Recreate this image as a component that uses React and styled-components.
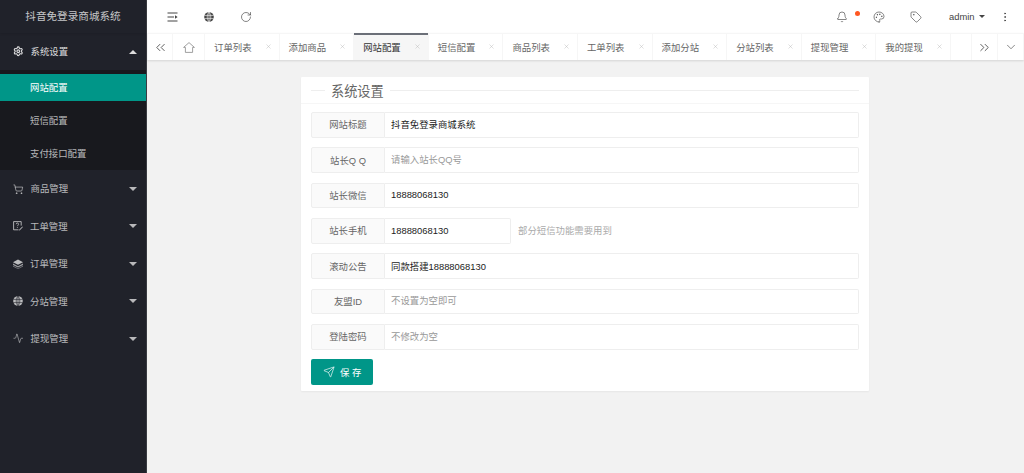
import React from 'react';
import styled, { createGlobalStyle } from 'styled-components';
import {
  Settings, ShoppingCart, Activity, RotateCw, Bell, Palette, Tag,
  EllipsisVertical, Send, ChevronsLeft, ChevronsRight, ChevronDown, X,
} from 'lucide-react';

const GlobalStyle = createGlobalStyle`
  html, body, #root { margin: 0; height: 100%; }
  body {
    overflow: hidden;
    background: #f2f2f2;
    font-family: "Liberation Sans", "Noto Sans CJK SC", sans-serif;
    font-size: 9.4px;
    color: #666;
  }
  * { box-sizing: border-box; }
`;

const Layout = styled.div`
  display: flex;
  height: 473px;
`;

const Sidebar = styled.aside`
  flex: none;
  width: 147px;
  background: #20222a;
  border-right: 1px solid #3a3c42;
  color: rgba(255, 255, 255, 0.7);
`;

const Logo = styled.div`
  height: 33px;
  line-height: 33px;
  text-align: center;
  font-size: 10.6px;
  color: rgba(255, 255, 255, 0.75);
  box-shadow: 0 1px 2px rgba(0, 0, 0, 0.1);
`;

const NavItem = styled.div`
  display: flex;
  align-items: center;
  height: 37.4px;
  padding: 0 9px 0 13px;
  gap: 7px;
  color: ${(p) => (p.$open ? 'rgba(255,255,255,.85)' : 'rgba(255,255,255,.7)')};
  svg { flex: none; }
`;

const NavLabel = styled.span`
  flex: 1;
  padding-bottom: 1px;
`;

const Caret = styled.i`
  width: 0;
  height: 0;
  border: 4px solid transparent;
  ${(p) => (p.$up
    ? 'border-bottom: 4px solid #ddd; border-top-width: 0;'
    : 'border-top: 4px solid #b9b9bb; border-bottom-width: 0;')}
`;

const SubMenu = styled.div`
  background: #18191e;
  padding-top: 3.5px;
`;

const SubItem = styled.div`
  display: flex;
  align-items: center;
  padding: 0 0 1.5px 30px;
  height: ${(p) => (p.$active ? '27px' : '33.2px')};
  margin-bottom: ${(p) => (p.$active ? '3px' : '0')};
  background: ${(p) => (p.$active ? '#009688' : 'transparent')};
  color: ${(p) => (p.$active ? '#fff' : 'rgba(255,255,255,.7)')};
`;

const Main = styled.div`
  flex: 1;
  min-width: 0;
  display: flex;
  flex-direction: column;
`;

const Header = styled.header`
  flex: none;
  display: flex;
  align-items: center;
  height: 33px;
  background: #fff;
  color: #444;
  padding: 0 0 0 18px;
`;

const HeaderTool = styled.span`
  display: flex;
  align-items: center;
  justify-content: center;
  width: 14px;
  margin-right: ${(p) => p.$gap || 23}px;
`;

const Spacer = styled.div`
  flex: 1;
`;

const BellBox = styled.span`
  position: relative;
  display: flex;
`;

const Dot = styled.i`
  position: absolute;
  top: 0.5px;
  left: 19.5px;
  width: 5px;
  height: 5px;
  border-radius: 50%;
  background: #ff5722;
`;

const UserName = styled.span`
  display: flex;
  align-items: center;
  gap: 4.5px;
  margin-right: 13px;
  color: #444;
`;

const UserCaret = styled.i`
  border: 3.6px solid transparent;
  border-top: 3.6px solid #444;
  border-bottom-width: 0;
`;

const TabBar = styled.nav`
  flex: none;
  display: flex;
  height: 27px;
  background: #fff;
  border-top: 1px solid #f6f6f6;
  box-shadow: 0 1px 2px rgba(0, 0, 0, 0.12);
  color: #666;
`;

const TabTool = styled.span`
  flex: none;
  display: flex;
  align-items: center;
  justify-content: center;
  width: ${(p) => p.$w}px;
  border-right: 1px solid #f6f6f6;
  color: ${(p) => p.$color || '#555'};
  ${(p) => p.$left && 'border-left: 1px solid #f6f6f6;'}
`;

const Tabs = styled.div`
  flex: 1;
  min-width: 0;
  display: flex;
`;

const TabItem = styled.div`
  flex: none;
  position: relative;
  display: flex;
  align-items: center;
  justify-content: space-between;
  width: 74.6px;
  padding: 0 7px 1px 9px;
  border-right: 1px solid #f6f6f6;
  background: ${(p) => (p.$active ? '#f6f6f6' : '#fff')};
  color: ${(p) => (p.$active ? '#333' : '#666')};
  svg { color: #b5b5b5; }
  ${(p) => p.$active && `
    &::before {
      content: "";
      position: absolute;
      left: 0;
      right: 0;
      top: -1px;
      height: 2px;
      background: #6b6f78;
    }
  `}
`;

const Content = styled.main`
  flex: 1;
  padding: 17px 155px 0 154px;
`;

const Card = styled.section`
  background: #fff;
  border-radius: 1px;
  box-shadow: 0 1px 2px rgba(0, 0, 0, 0.05);
`;

const CardHead = styled.div`
  display: flex;
  align-items: center;
  height: 27px;
  padding: 0 10px;
  border-bottom: 1px solid #f6f6f6;
`;

const HeadLine = styled.i`
  height: 1px;
  background: #eee;
  flex: ${(p) => (p.$grow ? 1 : 'none')};
  width: ${(p) => (p.$grow ? 'auto' : '14px')};
`;

const Legend = styled.h2`
  margin: 0;
  padding: 0 6px;
  font-size: 13.2px;
  font-weight: 400;
  color: #666;
`;

const Form = styled.form`
  display: flex;
  flex-direction: column;
  gap: 9.85px;
  padding: 8px 10px 6px;
`;

const Row = styled.div`
  display: flex;
  align-items: center;
  height: 25.5px;
`;

const Label = styled.label`
  flex: none;
  width: 74px;
  height: 100%;
  display: flex;
  align-items: center;
  justify-content: center;
  padding-bottom: 1px;
  background: #fafafa;
  border: 1px solid #eee;
  border-radius: 2px 0 0 2px;
  color: #666;
`;

const Input = styled.input`
  flex: ${(p) => (p.$short ? 'none' : 1)};
  width: ${(p) => (p.$short ? '126px' : 'auto')};
  min-width: 0;
  height: 100%;
  padding: 0 6px 1px;
  border: 1px solid #eee;
  border-left: 0;
  border-radius: 0 2px 2px 0;
  outline: none;
  background: #fff;
  font: inherit;
  color: #222;
  &::placeholder { color: #999; opacity: 1; }
`;

const Help = styled.span`
  margin-left: 7px;
  padding-bottom: 1px;
  color: #aaa;
`;

const SaveButton = styled.button`
  align-self: flex-start;
  display: flex;
  align-items: center;
  gap: 5px;
  width: 62px;
  height: 26px;
  padding: 0 0 0 12px;
  border: 0;
  border-radius: 2px;
  background: #009688;
  color: #fff;
  font: inherit;
  letter-spacing: 2.5px;
`;

// 线框图标库里没有的几个，直接画
const ShrinkIcon = () => (
  <svg width="11" height="10" viewBox="0 0 11 10" fill="none" stroke="currentColor" strokeWidth="1.1">
    <path d="M0.5 1h10M0.5 5h6.5M0.5 9h10" />
    <path d="M8 3.2 10.6 5 8 6.8z" fill="currentColor" stroke="none" />
  </svg>
);

const GlobeIcon = ({ line }) => (
  <svg width="10" height="10" viewBox="0 0 10 10" fill="none">
    <circle cx="5" cy="5" r="4.8" fill="currentColor" />
    <path
      d="M0.3 3.4h9.4M0.3 6.6h9.4M5 0.2v9.6M5 0.2C2.6 2.8 2.6 7.2 5 9.8M5 0.2c2.4 2.6 2.4 7 0 9.6"
      stroke={line}
      strokeWidth="0.6"
    />
  </svg>
);

const LayersIcon = () => (
  <svg width="10" height="10" viewBox="0 0 10 10" fill="currentColor">
    <path d="M5 0.6 10 3.2 5 5.8 0 3.2z" />
    <path d="M0 4.6 5 7.2 10 4.6V6L5 8.6 0 6z" opacity="0.8" />
    <path d="M0 6.8 5 9.4 10 6.8V7.4L5 10 0 7.4z" opacity="0.7" />
  </svg>
);

const TicketIcon = () => (
  <svg width="10" height="10" viewBox="0 0 10 10" fill="none" stroke="currentColor" strokeWidth="0.9">
    <path d="M5.5 8.8H0.6V0.6h7.6v4" />
    <path d="M3.2 3.2c0-1.6 2.4-1.6 2.4 0 0 .9-1.2 1-1.2 2M4.4 6.2v.8" strokeWidth="0.8" />
    <path d="M9.4 5.4 6.4 8.6l-.5 1 1-.4 3-3.2z" fill="currentColor" stroke="none" />
  </svg>
);

const HomeIcon = () => (
  <svg width="12" height="11" viewBox="0 0 12 11" fill="none" stroke="currentColor" strokeWidth="0.8">
    <path d="M0.6 5.4 6 0.6l5.4 4.8H9.6v5H2.4v-5z" />
  </svg>
);

const navItems = [
  { label: '商品管理', icon: <ShoppingCart size={10.5} strokeWidth={1.6} /> },
  { label: '工单管理', icon: <TicketIcon /> },
  { label: '订单管理', icon: <LayersIcon /> },
  { label: '分站管理', icon: <GlobeIcon line="#20222a" /> },
  { label: '提现管理', icon: <Activity size={10.5} strokeWidth={1.4} /> },
];

const tabs = ['订单列表', '添加商品', '网站配置', '短信配置', '商品列表', '工单列表', '添加分站', '分站列表', '提现管理', '我的提现'];

const fields = [
  { label: '网站标题', value: '抖音免登录商城系统' },
  { label: '站长Q Q', placeholder: '请输入站长QQ号' },
  { label: '站长微信', value: '18888068130' },
  { label: '站长手机', value: '18888068130', short: true, help: '部分短信功能需要用到' },
  { label: '滚动公告', value: '同款搭建18888068130' },
  { label: '友盟ID', placeholder: '不设置为空即可' },
  { label: '登陆密码', placeholder: '不修改为空' },
];

const App = () => (
  <>
    <GlobalStyle />
    <Layout>
      <Sidebar>
        <Logo>抖音免登录商城系统</Logo>
        <NavItem $open>
          <Settings size={10.5} strokeWidth={2.6} />
          <NavLabel>系统设置</NavLabel>
          <Caret $up />
        </NavItem>
        <SubMenu>
          <SubItem $active>网站配置</SubItem>
          <SubItem>短信配置</SubItem>
          <SubItem>支付接口配置</SubItem>
        </SubMenu>
        {navItems.map(({ label, icon }) => (
          <NavItem key={label}>
            {icon}
            <NavLabel>{label}</NavLabel>
            <Caret />
          </NavItem>
        ))}
      </Sidebar>
      <Main>
        <Header>
          <HeaderTool><ShrinkIcon /></HeaderTool>
          <HeaderTool><GlobeIcon line="#fff" /></HeaderTool>
          <HeaderTool><RotateCw size={12} strokeWidth={1.3} /></HeaderTool>
          <Spacer />
          <HeaderTool $gap={23}>
            <BellBox>
              <Bell size={12} strokeWidth={1.3} />
              <Dot />
            </BellBox>
          </HeaderTool>
          <HeaderTool $gap={23.5}><Palette size={12} strokeWidth={1.3} /></HeaderTool>
          <HeaderTool $gap={25.5}><Tag size={12} strokeWidth={1.3} /></HeaderTool>
          <UserName>admin<UserCaret /></UserName>
          <HeaderTool $gap={12}><EllipsisVertical size={12} strokeWidth={1.6} /></HeaderTool>
        </Header>
        <TabBar>
          <TabTool $w={26} $left><ChevronsLeft size={15} strokeWidth={1.5} /></TabTool>
          <TabTool $w={32} $color="#888"><HomeIcon /></TabTool>
          <Tabs>
            {tabs.map((t) => (
              <TabItem key={t} $active={t === '网站配置'}>
                {t}
                <X size={7} strokeWidth={1.5} />
              </TabItem>
            ))}
          </Tabs>
          <TabTool $w={27} $left><ChevronsRight size={15} strokeWidth={1.5} /></TabTool>
          <TabTool $w={26}><ChevronDown size={14} strokeWidth={1.2} /></TabTool>
        </TabBar>
        <Content>
          <Card>
            <CardHead>
              <HeadLine />
              <Legend>系统设置</Legend>
              <HeadLine $grow />
            </CardHead>
            <Form>
              {fields.map((f) => (
                <Row key={f.label}>
                  <Label>{f.label}</Label>
                  <Input readOnly $short={f.short} defaultValue={f.value} placeholder={f.placeholder} />
                  {f.help && <Help>{f.help}</Help>}
                </Row>
              ))}
              <SaveButton type="button"><Send size={12} strokeWidth={1.3} />保存</SaveButton>
            </Form>
          </Card>
        </Content>
      </Main>
    </Layout>
  </>
);

export default App;
